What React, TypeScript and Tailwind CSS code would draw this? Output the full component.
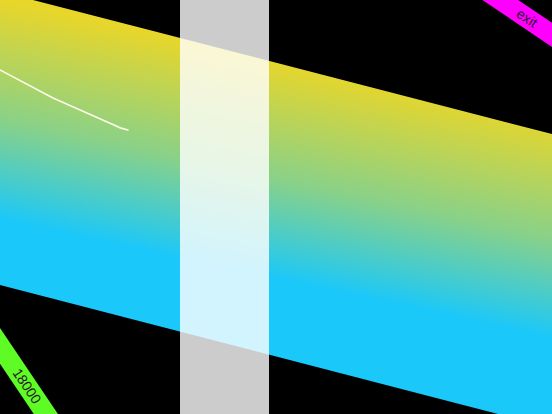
import React from 'react';

// band edges measured off the screen: top y = 0.259*(x-33), bottom y = 285 + 0.259*x
const band = '0,-8.5 552,134 552,428 0,285';

export default function App() {
  return (
    <div className="relative w-[552px] h-[414px] overflow-hidden bg-black font-['Liberation_Sans',Arial,sans-serif]">
      {/* Playfield drawing */}
      <svg className="absolute inset-0" width="552" height="414" viewBox="0 0 552 414">
        <defs>
          {/* fill runs a bit flatter than the band itself */}
          <linearGradient id="bandFill" gradientUnits="userSpaceOnUse" x1="0" y1="0" x2="-45.2" y2="210.3">
            <stop offset="0" stopColor="#e8d62a" />
            <stop offset="0.55" stopColor="#88d189" />
            <stop offset="1" stopColor="#1ac8fa" />
          </linearGradient>
        </defs>
        <polygon points={band} fill="url(#bandFill)" />
        <path d="M0 70 L53 98 L114 125 Q120 128.5 128 130" fill="none" stroke="#fffbe8" strokeWidth="1.5" strokeLinejoin="round" strokeLinecap="round" />
      </svg>

      {/* Vertical lane */}
      <div className="absolute left-[180px] top-0 h-full w-[89px] bg-white/80" />

      {/* Exit ribbon */}
      <div className="absolute left-[427px] top-[8px] flex h-[20px] w-[200px] rotate-[34deg] items-center justify-center bg-[#ff00ff] text-[14px] text-[#2a1a2a]">
        exit
      </div>

      {/* Score ribbon */}
      <div className="absolute left-[-73px] top-[376px] flex h-[20px] w-[200px] rotate-[56deg] items-center justify-center bg-[#5efc24] text-[14px] text-[#2a1a2a]">
        18000
      </div>
    </div>
  );
}
